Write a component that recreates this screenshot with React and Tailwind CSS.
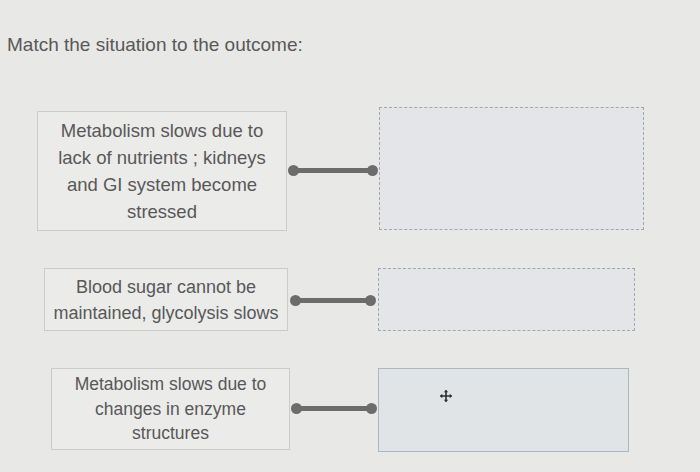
import React from "react";

function Connector({ width }) {
  return (
    <div className="relative h-[11px] flex items-center" style={{ width }}>
      <div className="absolute left-[4px] right-[4px] top-[3px] h-[5px] bg-[#6c6c6c]" />
      <div className="absolute left-0 top-0 w-[11px] h-[11px] rounded-full bg-[#6c6c6c]" />
      <div className="absolute right-0 top-0 w-[11px] h-[11px] rounded-full bg-[#6c6c6c]" />
    </div>
  );
}

function MoveCursor() {
  return (
    <svg width="14" height="14" viewBox="0 0 14 14" className="absolute left-[60px] top-[20px]">
      <path d="M7 1.5 V12.5 M1.5 7 H12.5" stroke="#2e2e2e" strokeWidth="1.6" />
      <path d="M7 0.8 L9.2 3.3 H4.8 Z M7 13.2 L9.2 10.7 H4.8 Z M0.8 7 L3.3 4.8 V9.2 Z M13.2 7 L10.7 4.8 V9.2 Z" fill="#2e2e2e" />
    </svg>
  );
}

export default function App() {
  return (
    <div className="w-[700px] h-[472px] bg-[#e8e8e6] overflow-hidden text-[#585858]" style={{ fontFamily: '"Liberation Sans", Arial, sans-serif' }}>
      <div className="pt-[33px] pl-[7px] text-[19px] leading-[24px]">Match the situation to the outcome:</div>

      {/* Row 1 */}
      <div className="flex items-start pl-[37px] mt-[50px]">
        <div className="mt-[4px] w-[250px] h-[120px] border border-[#cbcbca] bg-[#ebebea] flex items-center justify-center text-center text-[18.5px] leading-[27px]">
          <div>Metabolism slows due to<br />lack of nutrients ; kidneys<br />and GI system become<br />stressed</div>
        </div>
        <div className="mt-[58px] ml-[1px]"><Connector width={90} /></div>
        <div className="ml-[1px] w-[265px] h-[123px] border border-dashed border-[#a0a8b0] bg-[#e3e5e8]" />
      </div>

      {/* Row 2 */}
      <div className="flex items-start pl-[44px] mt-[37px]">
        <div className="w-[244px] h-[63px] border border-[#cbcbca] bg-[#ebebea] flex items-center justify-center text-center text-[18px] leading-[26px]">
          <div>Blood sugar cannot be<br />maintained, glycolysis slows</div>
        </div>
        <div className="mt-[27px] ml-[2px]"><Connector width={86} /></div>
        <div className="ml-[2px] w-[257px] h-[63px] border border-dashed border-[#a0a8b0] bg-[#e3e5e8]" />
      </div>

      {/* Row 3 */}
      <div className="flex items-start pl-[51px] mt-[37px]">
        <div className="w-[239px] h-[82px] border border-[#cbcbca] bg-[#ebebea] flex items-center justify-center text-center text-[17.5px] leading-[24.5px]">
          <div>Metabolism slows due to<br />changes in enzyme<br />structures</div>
        </div>
        <div className="mt-[35px] ml-[1px]"><Connector width={86} /></div>
        <div className="relative ml-[1px] w-[251px] h-[84px] border border-[#a9b8c7] bg-[#e0e4e7]">
          <MoveCursor />
        </div>
      </div>
    </div>
  );
}
